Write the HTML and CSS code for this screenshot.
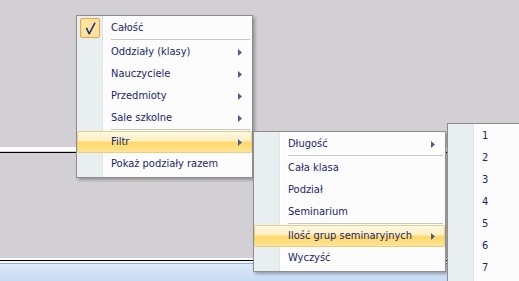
FILE: index.html
```html
<!DOCTYPE html>
<html lang="pl">
<head>
<meta charset="utf-8">
<title>Menu</title>
<link rel="stylesheet" href="styles.css">
</head>
<body>
<div class="desk">
  <div class="pane pane-top"></div>
  <div class="rule rule-top"></div>
  <div class="pane pane-mid"></div>
  <div class="rule rule-bottom"></div>
  <div class="statusbar"></div>

  <div class="menu menu-main">
    <div class="item">
      <span class="icon"><span class="check"><svg width="18" height="18" viewBox="0 0 18 18"><polyline points="5.6,9.4 8.2,14.8 13.8,4.2" fill="none" stroke="#1e2a80" stroke-width="1.5" stroke-linejoin="round" stroke-linecap="round"/></svg></span></span>
      <span class="label">Całość</span>
    </div>
    <div class="sep"></div>
    <div class="item"><span class="icon"></span><span class="label">Oddziały (klasy)</span><svg class="arrow" width="4" height="7" viewBox="0 0 4 7"><polygon points="0,0 4,3.5 0,7"/></svg></div>
    <div class="item"><span class="icon"></span><span class="label">Nauczyciele</span><svg class="arrow" width="4" height="7" viewBox="0 0 4 7"><polygon points="0,0 4,3.5 0,7"/></svg></div>
    <div class="item"><span class="icon"></span><span class="label">Przedmioty</span><svg class="arrow" width="4" height="7" viewBox="0 0 4 7"><polygon points="0,0 4,3.5 0,7"/></svg></div>
    <div class="item"><span class="icon"></span><span class="label">Sale szkolne</span><svg class="arrow" width="4" height="7" viewBox="0 0 4 7"><polygon points="0,0 4,3.5 0,7"/></svg></div>
    <div class="sep"></div>
    <div class="item active"><span class="icon"></span><span class="label">Filtr</span><svg class="arrow" width="4" height="7" viewBox="0 0 4 7"><polygon points="0,0 4,3.5 0,7"/></svg></div>
    <div class="item"><span class="icon"></span><span class="label">Pokaż podziały razem</span></div>
  </div>

  <div class="menu menu-filter">
    <div class="item"><span class="icon"></span><span class="label">Długość</span><svg class="arrow" width="4" height="7" viewBox="0 0 4 7"><polygon points="0,0 4,3.5 0,7"/></svg></div>
    <div class="sep"></div>
    <div class="item"><span class="icon"></span><span class="label">Cała klasa</span></div>
    <div class="item"><span class="icon"></span><span class="label">Podział</span></div>
    <div class="item"><span class="icon"></span><span class="label">Seminarium</span></div>
    <div class="sep"></div>
    <div class="item active"><span class="icon"></span><span class="label">Ilość grup seminaryjnych</span><svg class="arrow" width="4" height="7" viewBox="0 0 4 7"><polygon points="0,0 4,3.5 0,7"/></svg></div>
    <div class="item"><span class="icon"></span><span class="label">Wyczyść</span></div>
  </div>

  <div class="menu menu-groups">
    <div class="item"><span class="icon"></span><span class="label">1</span></div>
    <div class="item"><span class="icon"></span><span class="label">2</span></div>
    <div class="item"><span class="icon"></span><span class="label">3</span></div>
    <div class="item"><span class="icon"></span><span class="label">4</span></div>
    <div class="item"><span class="icon"></span><span class="label">5</span></div>
    <div class="item"><span class="icon"></span><span class="label">6</span></div>
    <div class="item"><span class="icon"></span><span class="label">7</span></div>
  </div>
</div>
</body>
</html>
```

FILE: styles.css
```css
html, body {
  margin: 0;
  padding: 0;
}

body {
  font-family: "DejaVu Sans Condensed", "DejaVu Sans", sans-serif;
  font-stretch: condensed;
  font-size: 11px;
  color: #1b1f6e;
}

.desk {
  position: relative;
  width: 519px;
  height: 281px;
  overflow: hidden;
  display: flex;
  flex-direction: column;
  background: #d3d0d5;
}

.pane-top {
  height: 147px;
  flex: none;
}

.rule-top {
  height: 6px;
  flex: none;
  box-sizing: border-box;
  border-top: 4px solid #ffffff;
  border-bottom: 1px solid #000000;
}

.pane-mid {
  flex: 1;
}

.rule-bottom {
  height: 6px;
  flex: none;
  background: linear-gradient(to bottom, #ffffff 0 2px, #000000 2px 3px, #f4f8fd 3px 5px, #8fb0dc 5px 6px);
}

.statusbar {
  height: 17px;
  flex: none;
  background: linear-gradient(to bottom, #dde9f8, #c6dbf4);
}

.menu {
  position: absolute;
  box-sizing: border-box;
  border: 1px solid #8e8e8e;
  padding: 1px 0 2px;
  background: linear-gradient(to right, #e9eef0 0 25px, #e1e3e4 25px 26px, #ffffff 26px 27px, #fcfcfc 27px);
  box-shadow: 2px 2px 3px rgba(0, 0, 0, 0.3);
}

.menu-main {
  left: 76px;
  top: 15px;
  width: 177px;
}

.menu-filter {
  left: 253px;
  top: 131px;
  width: 193px;
}

.menu-groups {
  left: 447px;
  top: 123px;
  width: 120px;
  padding-bottom: 12px;
}

.item {
  display: flex;
  align-items: center;
  height: 22px;
  line-height: 22px;
  white-space: nowrap;
}

.icon {
  flex: none;
  width: 34px;
  height: 22px;
  box-sizing: border-box;
  padding-left: 3px;
  display: flex;
  align-items: center;
}

.label {
  flex: 1;
}

.arrow {
  flex: none;
  margin-right: 10px;
  fill: #4d5b97;
}

.active {
  border-radius: 2px;
  box-shadow: inset 0 0 0 1px #e9cd86;
  background: linear-gradient(to bottom, #fffae6 0%, #ffefc0 45%, #ffd866 52%, #ffe59c 100%);
}

.check {
  width: 20px;
  height: 20px;
  box-sizing: border-box;
  border: 1px solid #efa44a;
  border-radius: 2px;
  background: #fee49f;
  display: flex;
}

.sep {
  height: 2px;
  box-sizing: border-box;
  margin: 0 2px 0 34px;
  border-top: 1px solid #c6c6c6;
  background: #ffffff;
}
```
